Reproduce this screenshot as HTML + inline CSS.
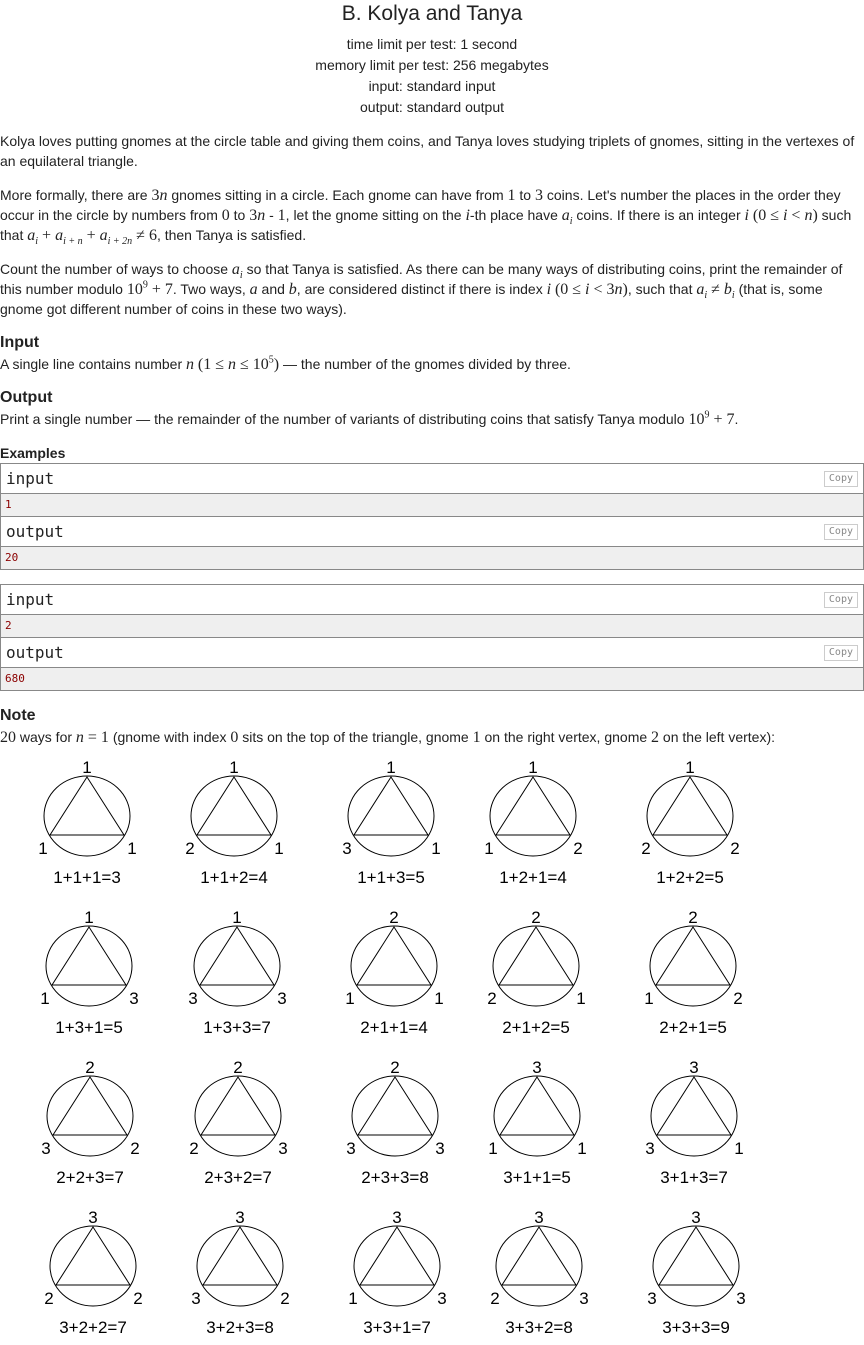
<!DOCTYPE html>
<html><head><meta charset="utf-8"><style>
body{margin:0;width:864px;height:1345px;background:#fff;position:relative;font-family:"Liberation Sans",sans-serif;color:#222;overflow:hidden}
.l{position:absolute;left:0;white-space:nowrap;font-size:14px;line-height:20px}
.c{left:0;width:864px;text-align:center}
.m{font-family:"Liberation Serif",serif;font-size:16px;line-height:0}
.i{font-family:"Liberation Serif",serif;font-style:italic;font-size:16px;line-height:0}
sub,sup{font-size:10px;line-height:0}
.h{font-weight:bold;font-size:16px}
.box{position:absolute;left:0;width:862px;border:1px solid #888;}
.hd{height:29px;border-bottom:1px solid #888;background:#fff;position:relative;font-family:"DejaVu Sans Mono",monospace;font-size:16px;line-height:29px;padding-left:5px}
.dt{height:22px;border-bottom:1px solid #888;background:#efefef;font-family:"DejaVu Sans Mono",monospace;font-size:11px;color:#8b0000;line-height:22px;padding-left:4px}
.cp{position:absolute;right:5px;top:7px;border:1px solid #ccc;font-size:10px;color:#888;line-height:14px;padding:0 4px;font-family:"DejaVu Sans Mono",monospace}
</style></head><body>
<div class="l c" style="top:2px;font-size:21px;line-height:24px">B. Kolya and Tanya</div>
<div class="l c" style="top:34px">time limit per test: 1 second</div>
<div class="l c" style="top:55px">memory limit per test: 256 megabytes</div>
<div class="l c" style="top:76px">input: standard input</div>
<div class="l c" style="top:97px">output: standard output</div>
<div class="l" style="top:131px">Kolya loves putting gnomes at the circle table and giving them coins, and Tanya loves studying triplets of gnomes, sitting in the vertexes of</div>
<div class="l" style="top:151px">an equilateral triangle.</div>
<div class="l" style="top:185px">More formally, there are <span class="m">3</span><span class="i">n</span> gnomes sitting in a circle. Each gnome can have from <span class="m">1</span> to <span class="m">3</span> coins. Let's number the places in the order they</div>
<div class="l" style="top:205px">occur in the circle by numbers from <span class="m">0</span> to <span class="m">3</span><span class="i">n</span> - <span class="m">1</span>, let the gnome sitting on the <span class="i">i</span>-th place have <span class="i">a<sub>i</sub></span> coins. If there is an integer <span class="i">i</span> <span class="m">(0 ≤ <i>i</i> &lt; <i>n</i>)</span> such</div>
<div class="l" style="top:225px">that <span class="i">a<sub>i</sub></span><span class="m"> + </span><span class="i">a<sub>i + n</sub></span><span class="m"> + </span><span class="i">a<sub>i + 2n</sub></span><span class="m"> ≠ 6</span>, then Tanya is satisfied.</div>
<div class="l" style="top:259px">Count the number of ways to choose <span class="i">a<sub>i</sub></span> so that Tanya is satisfied. As there can be many ways of distributing coins, print the remainder of</div>
<div class="l" style="top:279px">this number modulo <span class="m">10<sup>9</sup> + 7</span>. Two ways, <span class="i">a</span> and <span class="i">b</span>, are considered distinct if there is index <span class="i">i</span> <span class="m">(0 ≤ <i>i</i> &lt; 3<i>n</i>)</span>, such that <span class="i">a<sub>i</sub></span><span class="m"> ≠ </span><span class="i">b<sub>i</sub></span> (that is, some</div>
<div class="l" style="top:299px">gnome got different number of coins in these two ways).</div>
<div class="l h" style="top:333px">Input</div>
<div class="l" style="top:354px">A single line contains number <span class="i">n</span> <span class="m">(1 ≤ <i>n</i> ≤ 10<sup>5</sup>)</span> — the number of the gnomes divided by three.</div>
<div class="l h" style="top:388px">Output</div>
<div class="l" style="top:409px">Print a single number — the remainder of the number of variants of distributing coins that satisfy Tanya modulo <span class="m">10<sup>9</sup> + 7</span>.</div>
<div class="l" style="top:443px;font-weight:bold">Examples</div>
<div class="box" style="top:463px"><div class="hd">input<span class="cp">Copy</span></div><div class="dt">1</div><div class="hd">output<span class="cp">Copy</span></div><div class="dt" style="border-bottom:0">20</div></div>
<div class="box" style="top:584px"><div class="hd">input<span class="cp">Copy</span></div><div class="dt">2</div><div class="hd">output<span class="cp">Copy</span></div><div class="dt" style="border-bottom:0">680</div></div>
<div class="l h" style="top:706px">Note</div>
<div class="l" style="top:727px"><span class="m">20</span> ways for <span class="i">n</span><span class="m"> = 1</span> (gnome with index <span class="m">0</span> sits on the top of the triangle, gnome <span class="m">1</span> on the right vertex, gnome <span class="m">2</span> on the left vertex):</div>
<div id="f"></div>
<script>
var cx=[[87,234,391,533,690],[89,237,394,536,693],[90,238,395,537,694],[93,240,397,539,696]];
var lab=[["111","121","131","112","122"],["113","133","211","221","212"],["232","223","233","311","331"],["322","332","313","323","333"]];
var s='<svg xmlns="http://www.w3.org/2000/svg" style="position:absolute;left:0;top:0" width="864" height="1345" font-family="Liberation Sans,sans-serif" font-size="17">';
for(var r=0;r<4;r++){var y=750+r*150;for(var c=0;c<5;c++){var x=cx[r][c],L=lab[r][c];var t=+L[0],a=+L[1],b=+L[2];
s+='<ellipse cx="'+x+'" cy="'+(y+66)+'" rx="43" ry="40" fill="none" stroke="#000"/>';
s+='<path d="M'+x+' '+(y+27)+'L'+(x-37)+' '+(y+85)+'L'+(x+37)+' '+(y+85)+'Z" fill="none" stroke="#000"/>';
s+='<text x="'+x+'" y="'+(y+23)+'" text-anchor="middle">'+t+'</text>';
s+='<text x="'+(x-44)+'" y="'+(y+104)+'" text-anchor="middle">'+a+'</text>';
s+='<text x="'+(x+45)+'" y="'+(y+104)+'" text-anchor="middle">'+b+'</text>';
s+='<text x="'+x+'" y="'+(y+133)+'" text-anchor="middle">'+t+'+'+b+'+'+a+'='+(t+a+b)+'</text>';}}
s+='</svg>';document.getElementById('f').innerHTML=s;
</script>
</body></html>
